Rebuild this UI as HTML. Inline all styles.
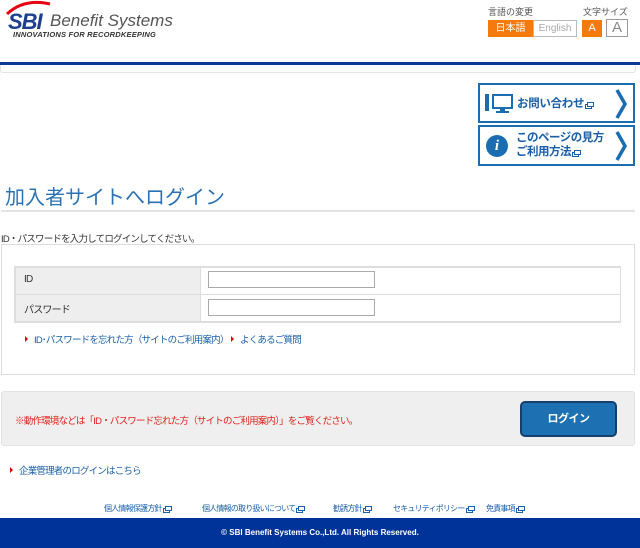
<!DOCTYPE html>
<html><head><meta charset="utf-8"><style>
*{margin:0;padding:0;box-sizing:border-box}
body{width:640px;height:548px;position:relative;background:#fff;font-family:"Liberation Sans","Noto Sans CJK JP",sans-serif;color:#333;overflow:hidden}
.a{position:absolute;white-space:nowrap}
.n{letter-spacing:-0.8px}
.tri{display:inline-block;width:0;height:0;border-left:3px solid #d00;border-top:3px solid transparent;border-bottom:3px solid transparent;margin-right:6px;vertical-align:1px}
.win{display:inline-block;width:7px;height:5px;border:1px solid #1a5fa8;margin-left:3px;vertical-align:0;box-shadow:-2px 2px 0 -1px #fff,-2px 2px 0 0 #1a5fa8}
</style></head><body>
<svg class="a" style="left:4px;top:0" width="60" height="20"><path d="M3 14 Q20 -2 46 4" stroke="#e60012" stroke-width="3" fill="none"/></svg>
<div class="a" style="left:8px;top:9px;font:italic bold 22px 'Liberation Sans',sans-serif;color:#1d3f8e;letter-spacing:-1px">SBI</div>
<div class="a" style="left:50px;top:11px;font:italic 17px 'Liberation Sans',sans-serif;color:#555">Benefit Systems</div>
<div class="a" style="left:13px;top:30px;font:italic bold 7.5px 'Liberation Sans',sans-serif;color:#333;letter-spacing:.2px">INNOVATIONS FOR RECORDKEEPING</div>
<div class="a" style="left:488px;top:5px;font-size:9px;color:#555">言語の変更</div>
<div class="a" style="left:583px;top:5px;font-size:9px;color:#555">文字サイズ</div>
<div class="a" style="left:488px;top:20px;width:45px;height:17px;background:#f47a0e;color:#fff;font-size:10px;text-align:center;line-height:17px">日本語</div>
<div class="a" style="left:533px;top:20px;width:44px;height:17px;border:1px solid #bbb;color:#aaa;font-size:10px;text-align:center;line-height:15px">English</div>
<div class="a" style="left:582px;top:20px;width:20px;height:17px;background:#f47a0e;color:#fff;font-size:11px;text-align:center;line-height:17px">A</div>
<div class="a" style="left:606px;top:19px;width:22px;height:18px;border:1px solid #999;color:#888;font-size:15px;text-align:center;line-height:16px">A</div>
<div class="a" style="left:0;top:62px;width:640px;height:3px;background:#0d3a96"></div>
<div class="a" style="left:0;top:65px;width:636px;height:8px;border:1px solid #e4e4e4;border-top:none;border-radius:0 0 3px 3px"></div>
<div class="a" style="left:478px;top:83px;width:157px;height:40px;border:2px solid #1a6db0"></div>
<svg class="a" style="left:484px;top:92px" width="30" height="24"><rect x="1" y="2" width="4" height="17" fill="#1a6db0"/><rect x="9" y="3" width="19" height="13" fill="none" stroke="#1a6db0" stroke-width="2"/><rect x="16" y="16" width="5" height="3" fill="#1a6db0"/><rect x="12" y="19" width="13" height="2" fill="#1a6db0"/></svg>
<div class="a" style="left:517px;top:95px;font-size:11.5px;font-weight:bold;color:#1a5fa8;letter-spacing:-0.3px">お問い合わせ<span class="win"></span></div>
<svg class="a" style="left:614px;top:88px" width="16" height="32"><path d="M3 2 L11 16 L3 30" stroke="#1a6db0" stroke-width="3.5" fill="none"/></svg>
<div class="a" style="left:478px;top:125px;width:157px;height:41px;border:2px solid #1a6db0"></div>
<div class="a" style="left:486px;top:135px;width:22px;height:22px;border-radius:50%;background:#1a6db0;color:#fff;font:italic bold 15px 'Liberation Serif',serif;text-align:center;line-height:22px">i</div>
<div class="a" style="left:516px;top:131px;font-size:11.5px;font-weight:bold;color:#1a5fa8;line-height:14px;letter-spacing:-0.5px">このページの見方<br>ご利用方法<span class="win"></span></div>
<svg class="a" style="left:614px;top:130px" width="16" height="32"><path d="M3 2 L11 16 L3 30" stroke="#1a6db0" stroke-width="3.5" fill="none"/></svg>
<div class="a" style="left:5px;top:181px;font-size:20px;color:#2a72b5;letter-spacing:0">加入者サイトへログイン</div>
<div class="a" style="left:1px;top:210px;width:634px;height:2px;background:#e2e2e2"></div>
<div class="a n" style="left:1px;top:231px;font-size:9.5px;color:#333">ID・パスワードを入力してログインしてください。</div>
<div class="a" style="left:1px;top:244px;width:634px;height:131px;border:1px solid #ddd"></div>
<div class="a" style="left:14px;top:266px;width:607px;height:57px;border:2px solid #ddd;border-right:1px solid #ddd"></div>
<div class="a" style="left:16px;top:268px;width:184px;height:53px;background:#eee"></div>
<div class="a" style="left:16px;top:294px;width:604px;height:1px;background:#ddd"></div>
<div class="a" style="left:200px;top:268px;width:1px;height:53px;background:#ddd"></div>
<div class="a n" style="left:24px;top:274px;font-size:10px">ID</div>
<div class="a n" style="left:24px;top:301px;font-size:10px">パスワード</div>
<div class="a" style="left:208px;top:271px;width:167px;height:17px;border:1px solid #aaa"></div>
<div class="a" style="left:208px;top:299px;width:167px;height:17px;border:1px solid #aaa"></div>
<div class="a n" style="left:25px;top:332px;font-size:9.5px;color:#1a5fa8"><span class="tri"></span>ID･パスワードを忘れた方（サイトのご利用案内）</div>
<div class="a n" style="left:231px;top:332px;font-size:9.5px;color:#1a5fa8"><span class="tri"></span>よくあるご質問</div>
<div class="a" style="left:1px;top:391px;width:634px;height:55px;background:#efefef;border:1px solid #e2e2e2;border-radius:3px"></div>
<div class="a n" style="left:15px;top:413px;font-size:9.5px;color:#e0201b">※動作環境などは「ID・パスワード忘れた方（サイトのご利用案内）」をご覧ください。</div>
<div class="a" style="left:520px;top:401px;width:97px;height:36px;background:#1d71b2;border:2px solid #15406e;border-radius:5px;color:#fff;font-size:11px;font-weight:bold;text-align:center;line-height:32px;letter-spacing:-0.5px">ログイン</div>
<div class="a n" style="left:10px;top:463px;font-size:9.5px;color:#1a5fa8"><span class="tri"></span>企業管理者のログインはこちら</div>
<div class="a n" style="left:104px;top:503px;font-size:8px;color:#1a5fa8">個人情報保護方針<span class="win"></span></div>
<div class="a n" style="left:202px;top:503px;font-size:8px;color:#1a5fa8">個人情報の取り扱いについて<span class="win"></span></div>
<div class="a n" style="left:333px;top:503px;font-size:8px;color:#1a5fa8">勧誘方針<span class="win"></span></div>
<div class="a n" style="left:393px;top:503px;font-size:8px;color:#1a5fa8">セキュリティポリシー<span class="win"></span></div>
<div class="a n" style="left:486px;top:503px;font-size:8px;color:#1a5fa8">免責事項<span class="win"></span></div>
<div class="a" style="left:0;top:518px;width:640px;height:30px;background:#003399;color:#fff;font-size:8px;font-weight:bold;text-align:center;line-height:30px">© SBI Benefit Systems Co.,Ltd. All Rights Reserved.</div>
</body></html>
